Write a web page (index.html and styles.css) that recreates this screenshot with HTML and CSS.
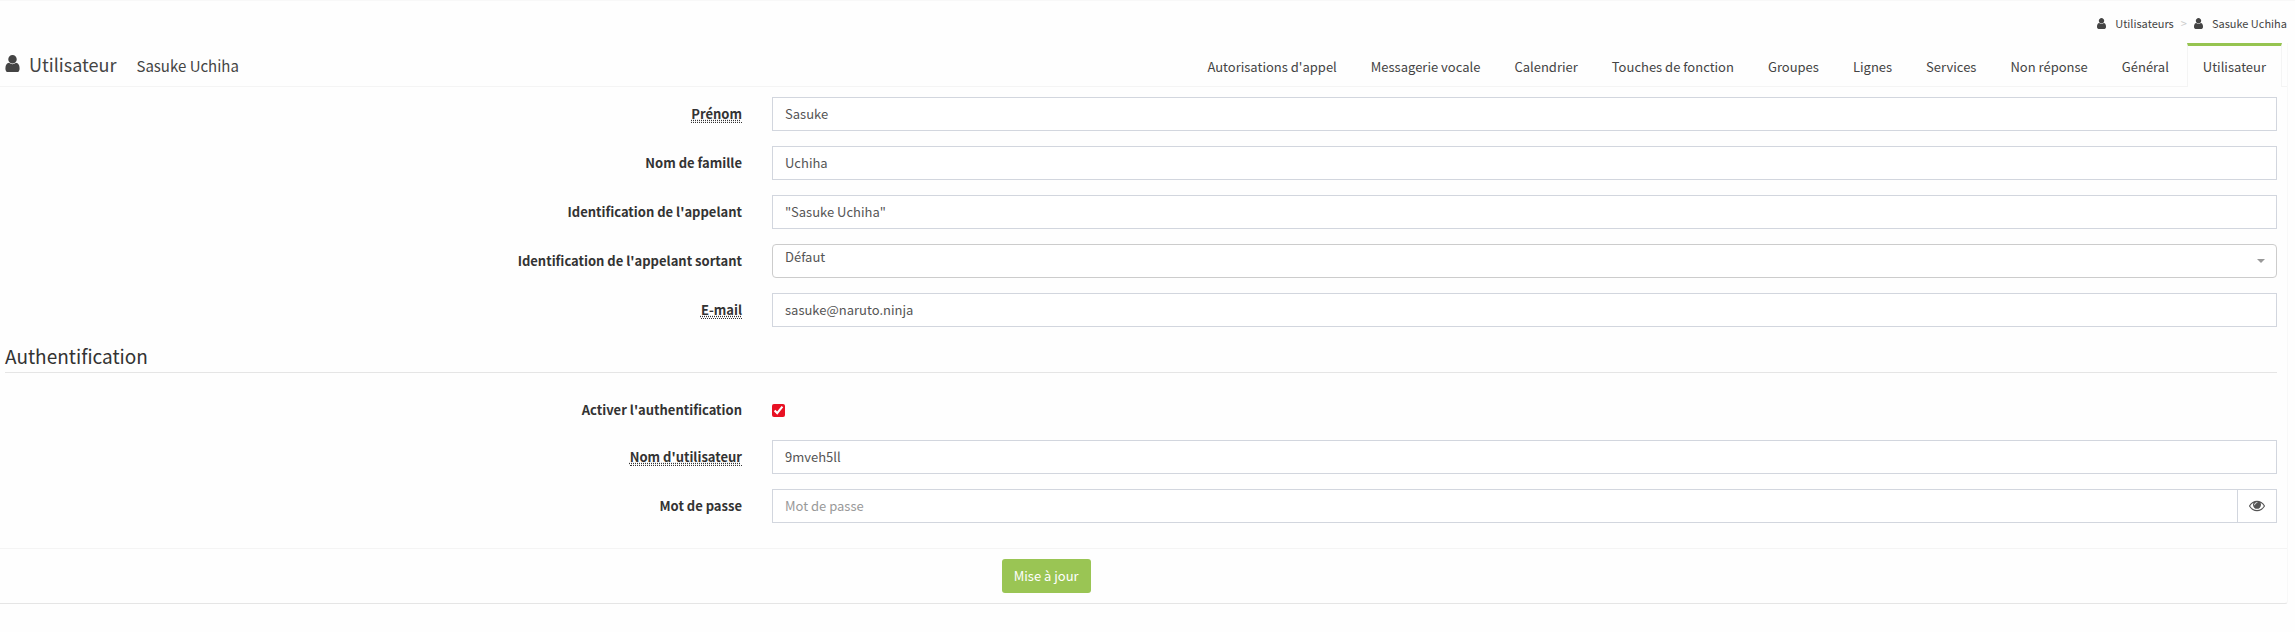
FILE: index.html
```html
<!DOCTYPE html>
<html lang="fr">
<head>
<meta charset="utf-8">
<title>Utilisateur - Sasuke Uchiha</title>
<link rel="stylesheet" href="styles.css">
</head>
<body>
<svg class="sprite" aria-hidden="true">
  <symbol id="icon-user" viewBox="0 0 1280 1536"><path d="M1280 1271q0 109-62.5 187t-150.5 78h-854q-88 0-150.5-78t-62.5-187q0-85 8.5-160.5t31.5-152 58.5-131 94-89 134.5-34.5q131 128 313 128t313-128q76 0 134.5 34.5t94 89 58.5 131 31.5 152 8.5 160.5zm-256-887q0 159-112.5 271.5t-271.5 112.5-271.5-112.5-112.5-271.5 112.5-271.5 271.5-112.5 271.5 112.5 112.5 271.5z"/></symbol>
  <symbol id="icon-eye" viewBox="0 384 1792 1152"><path d="M1664 960q-152-236-381-353 61 104 61 225 0 185-131.5 316.5t-316.5 131.5-316.5-131.5-131.5-316.5q0-121 61-225-229 117-381 353 133 205 333.5 326.5t434.5 121.5 434.5-121.5 333.5-326.5zm-720-384q0-20-14-34t-34-14q-125 0-214.5 89.5t-89.5 214.5q0 20 14 34t34 14 34-14 14-34q0-86 61-147t147-61q20 0 34-14t14-34zm848 384q0 34-20 69-140 230-376.5 368.5t-499.5 138.5-499.5-139-376.5-368q-20-35-20-69t20-69q140-229 376.5-368t499.5-139 499.5 139 376.5 368q20 35 20 69z"/></symbol>
</svg>
<nav class="breadcrumb" aria-label="Fil d'Ariane">
  <a href="#"><svg class="icon-small"><use href="#icon-user"/></svg>Utilisateurs</a>
  <span class="separator">&gt;</span>
  <a href="#"><svg class="icon-small"><use href="#icon-user"/></svg>Sasuke Uchiha</a>
</nav>
<main class="panel">
  <header class="panel-header">
    <h1 class="title"><svg class="icon-title"><use href="#icon-user"/></svg>Utilisateur <small class="subtitle">Sasuke Uchiha</small></h1>
    <nav class="tabs">
      <a class="tab" href="#">Autorisations d'appel</a>
      <a class="tab" href="#">Messagerie vocale</a>
      <a class="tab" href="#">Calendrier</a>
      <a class="tab" href="#">Touches de fonction</a>
      <a class="tab" href="#">Groupes</a>
      <a class="tab" href="#">Lignes</a>
      <a class="tab" href="#">Services</a>
      <a class="tab" href="#">Non réponse</a>
      <a class="tab" href="#">Général</a>
      <a class="tab active" href="#" aria-current="page">Utilisateur</a>
    </nav>
  </header>
  <form>
    <div class="fields">
      <div class="row"><label class="label" for="firstname"><abbr>Prénom</abbr></label><input class="control" id="firstname" type="text" value="Sasuke"></div>
      <div class="row"><label class="label" for="lastname">Nom de famille</label><input class="control" id="lastname" type="text" value="Uchiha"></div>
      <div class="row"><label class="label" for="callerid">Identification de l'appelant</label><input class="control" id="callerid" type="text" value='"Sasuke Uchiha"'></div>
      <div class="row"><label class="label" for="outcallerid">Identification de l'appelant sortant</label>
        <div class="select-wrap"><select class="control select" id="outcallerid"><option>Défaut</option></select></div></div>
      <div class="row"><label class="label" for="email"><abbr>E-mail</abbr></label><input class="control" id="email" type="text" value="sasuke@naruto.ninja"></div>
    </div>
    <h2 class="section-title">Authentification</h2>
    <div class="fields auth">
      <div class="row check-row"><label class="label" for="auth">Activer l'authentification</label><input class="checkbox" id="auth" type="checkbox" checked></div>
      <div class="row"><label class="label" for="username"><abbr>Nom d'utilisateur</abbr></label><input class="control" id="username" type="text" value="9mveh5ll"></div>
      <div class="row"><label class="label" for="password">Mot de passe</label>
        <div class="input-group"><input class="control" id="password" type="password" placeholder="Mot de passe"><button class="reveal" type="button" aria-label="Afficher le mot de passe"><svg class="icon-eye"><use href="#icon-eye"/></svg></button></div></div>
    </div>
    <footer class="panel-footer"><button class="submit" type="button">Mise à jour</button></footer>
  </form>
</main>
</body>
</html>
```
FILE: styles.css
```css
* {
  box-sizing: border-box;
}

body {
  margin: 0;
  padding-right: 7px;
  border-top: 1px solid #f8f8f8;
  background: #fefefe;
  color: #444;
  font: 13px/20px "Noto Sans CJK SC", "Noto Sans", sans-serif;
}

a {
  color: inherit;
  text-decoration: none;
}

svg {
  fill: currentColor;
}

input,
select,
button {
  margin: 0;
  font: inherit;
}

.sprite {
  display: none;
}

.breadcrumb {
  display: flex;
  justify-content: flex-end;
  gap: 7px;
  padding: 12px 1px 10px 0;
  font-size: 11px;
}

.breadcrumb a {
  display: flex;
  align-items: center;
}

.icon-small {
  width: 9px;
  height: 11px;
  margin-right: 9px;
}

.separator {
  color: #ccc;
}

.panel {
  border: solid #f8f8f8;
  border-width: 0 1px 1px 0;
  border-bottom-color: #e5e5e5;
  border-radius: 0 0 3px 0;
}

.panel-header {
  display: flex;
  justify-content: space-between;
  align-items: flex-start;
  height: 44px;
  padding: 0 5px;
  border-bottom: 1px solid #f4f4f4;
}

.title {
  display: flex;
  align-items: baseline;
  margin: 0;
  padding-top: 9px;
  font-size: 18px;
  font-weight: 400;
  line-height: 24px;
}

.icon-title {
  width: 15px;
  height: 17px;
  margin-right: 9px;
}

.subtitle {
  margin-left: 20px;
  font-size: 15px;
}

.tabs {
  display: flex;
  gap: 2px;
}

.tab {
  height: 44px;
  padding: 11px 15px 0;
  border: 1px solid transparent;
  border-width: 3px 1px 0;
  line-height: 20px;
}

.tab.active {
  border-color: #96c450 #f4f4f4 transparent;
  background: #fefefe;
}

.fields {
  display: grid;
  gap: 15px;
  padding: 10px 10px 0 0;
}

.row {
  display: grid;
  grid-template-columns: calc(33.3333% - 17px) minmax(0, 1fr);
  column-gap: 30px;
  align-items: center;
}

.label {
  color: #333;
  font-weight: 700;
  text-align: right;
}

.label abbr {
  display: inline-block;
  border-bottom: 1px dotted #333;
  line-height: 16px;
  text-decoration: underline dotted;
}

.control {
  width: 100%;
  height: 34px;
  padding: 5px 12px 7px;
  border: 1px solid #d2d6de;
  border-radius: 0;
  outline: 0;
  background: #fff;
  color: #555;
}

.control::placeholder {
  color: #999;
}

.select-wrap {
  position: relative;
  display: flex;
}

.select-wrap::after {
  content: "";
  position: absolute;
  top: 15px;
  right: 12px;
  border: solid transparent;
  border-width: 4px 4px 0;
  border-top-color: #999;
  pointer-events: none;
}

.select {
  appearance: none;
  padding: 1px 12px 9px;
  border-color: #ccc;
  border-radius: 4px;
}

.section-title {
  margin: 17px 10px 0 5px;
  padding-bottom: 4px;
  border-bottom: 1px solid #e5e5e5;
  color: #333;
  font-size: 19px;
  font-weight: 400;
  line-height: 24px;
}

.auth {
  padding-top: 27px;
}

.check-row {
  padding-bottom: 5px;
}

.checkbox {
  width: 13px;
  height: 13px;
  accent-color: #e81123;
}

.input-group {
  display: flex;
}

.reveal {
  display: flex;
  flex: none;
  align-items: center;
  justify-content: center;
  width: 39px;
  height: 34px;
  padding: 0;
  border: 1px solid #d2d6de;
  border-left: 0;
  background: #fff;
  color: #555;
}

.icon-eye {
  width: 16px;
  height: 12px;
}

.panel-footer {
  margin-top: 25px;
  padding: 10px 0 10px 43.8%;
  border-top: 1px solid #f4f4f4;
}

.submit {
  display: block;
  height: 34px;
  padding: 6px 12px;
  border: 0;
  border-radius: 3px;
  background: #9ac554;
  color: #fff;
}
```
